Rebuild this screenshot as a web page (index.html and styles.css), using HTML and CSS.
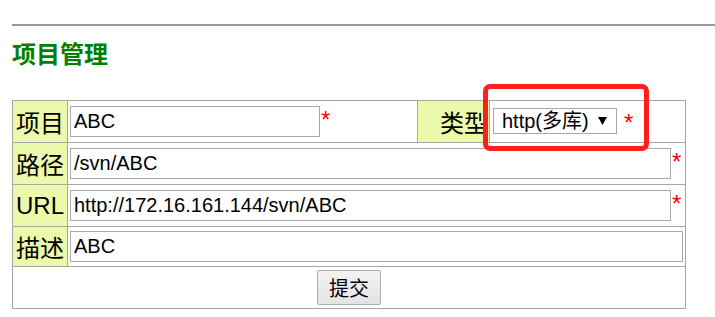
FILE: index.html
```html
<!DOCTYPE html>
<html lang="zh-CN">
<head>
<meta charset="utf-8">
<title>项目管理</title>
<link rel="stylesheet" href="styles.css">
</head>
<body>
<div class="page">
  <hr class="rule">
  <h2 class="title">项目管理</h2>
  <table class="form">
    <colgroup>
      <col class="c1"><col class="c2"><col class="c3"><col class="c4">
    </colgroup>
    <tr class="row">
      <td class="label">项目</td>
      <td class="field">
        <div class="line"><input class="inp short" type="text" value="ABC"><span class="req">*</span></div>
      </td>
      <td class="label right">类型</td>
      <td class="field">
        <div class="line">
          <span class="select"><select class="sel"><option>http(多库)</option></select><svg class="arrow" width="9" height="8" viewBox="0 0 9 8"><polygon points="0,0 9,0 4.5,8" fill="#000"/></svg></span><span class="req gap">*</span>
        </div>
      </td>
    </tr>
    <tr class="row">
      <td class="label">路径</td>
      <td class="field" colspan="3">
        <div class="line"><input class="inp grow" type="text" value="/svn/ABC"><span class="req fixw">*</span></div>
      </td>
    </tr>
    <tr class="row">
      <td class="label">URL</td>
      <td class="field" colspan="3">
        <div class="line"><input class="inp grow" type="text" value="http://172.16.161.144/svn/ABC"><span class="req fixw">*</span></div>
      </td>
    </tr>
    <tr class="row short-row">
      <td class="label">描述</td>
      <td class="field" colspan="3">
        <div class="line"><input class="inp grow" type="text" value="ABC"></div>
      </td>
    </tr>
    <tr class="row">
      <td class="submit" colspan="4"><button class="btn" type="button">提交</button></td>
    </tr>
  </table>
</div>
<div class="highlight"></div>
</body>
</html>
```

FILE: styles.css
```css
html, body {
  margin: 0;
  padding: 0;
  background: #fff;
}
body {
  font-family: "Liberation Sans", "Noto Sans CJK SC", sans-serif;
  color: #000;
}
.page {
  padding-left: 12px;
  padding-top: 24px;
}
.rule {
  margin: 0;
  border: 0;
  border-top: 2px solid #9a9a9a;
  height: 0;
}
.title {
  margin: 11px 0 0 0;
  font-size: 24px;
  line-height: 32px;
  font-weight: bold;
  color: #008000;
  font-family: "Noto Sans CJK SC", sans-serif;
}
.form {
  margin-top: 31px;
  border-collapse: collapse;
  table-layout: fixed;
  width: 674px;
}
.c1 { width: 55px; }
.c2 { width: 350px; }
.c3 { width: 72px; }
.c4 { width: 196px; }
.form td {
  border: 1px solid #a6a6a6;
  padding: 0 2px;
  vertical-align: middle;
}
.row { height: 42px; }
.short-row { height: 40px; }
.label {
  background: #ebf9aa;
  font-size: 24px;
  text-align: center;
  font-family: "Liberation Sans", "Noto Sans CJK SC", sans-serif;
  white-space: nowrap;
}
.form td.label { padding: 0 1px; }
.form td.label.right { text-align: right; padding-right: 1px; }
.line {
  display: flex;
  align-items: flex-start;
}
.inp {
  box-sizing: border-box;
  height: 31px;
  border: 1px solid #a9a9a9;
  padding: 0 3px;
  margin: 0;
  font-family: "Liberation Sans", "Noto Sans CJK SC", sans-serif;
  font-size: 20px;
  color: #000;
  background: #fff;
  outline: none;
}
.inp.short { width: 250px; flex: none; }
.inp.grow { flex: 1; min-width: 0; }
.req {
  color: #ff0000;
  font-size: 24px;
  line-height: 24px;
  margin-top: 2px;
  margin-left: 1px;
}
.req.fixw {
  width: 12px;
  flex: none;
  margin-left: 0;
  padding-left: 1px;
  box-sizing: border-box;
}
.req.gap { margin-left: 7px; margin-top: 3px; }
.select {
  display: inline-flex;
  align-items: center;
  box-sizing: border-box;
  width: 124px;
  height: 26px;
  margin-left: 1px;
  border: 1px solid #a9a9a9;
  background: #fff;
}
.sel {
  appearance: none;
  -webkit-appearance: none;
  border: 0;
  background: transparent;
  font-family: "Liberation Sans", "Noto Sans CJK SC", sans-serif;
  font-size: 20px;
  padding: 0 0 0 8px;
  margin: 0;
  width: 104px;
  height: 24px;
  color: #000;
  outline: none;
}
.arrow {
  display: block;
}
.submit {
  text-align: center;
}
.btn {
  box-sizing: border-box;
  width: 64px;
  height: 35px;
  border: 1px solid #adadad;
  border-radius: 2px;
  background: linear-gradient(#f3f3f3, #e3e3e3);
  font-family: "Noto Sans CJK SC", sans-serif;
  font-size: 20px;
  padding: 0;
  color: #000;
}
.highlight {
  position: absolute;
  left: 483px;
  top: 84px;
  width: 166px;
  height: 67px;
  box-sizing: border-box;
  border: 5px solid #fe1f1b;
  border-radius: 7px;
}
```
